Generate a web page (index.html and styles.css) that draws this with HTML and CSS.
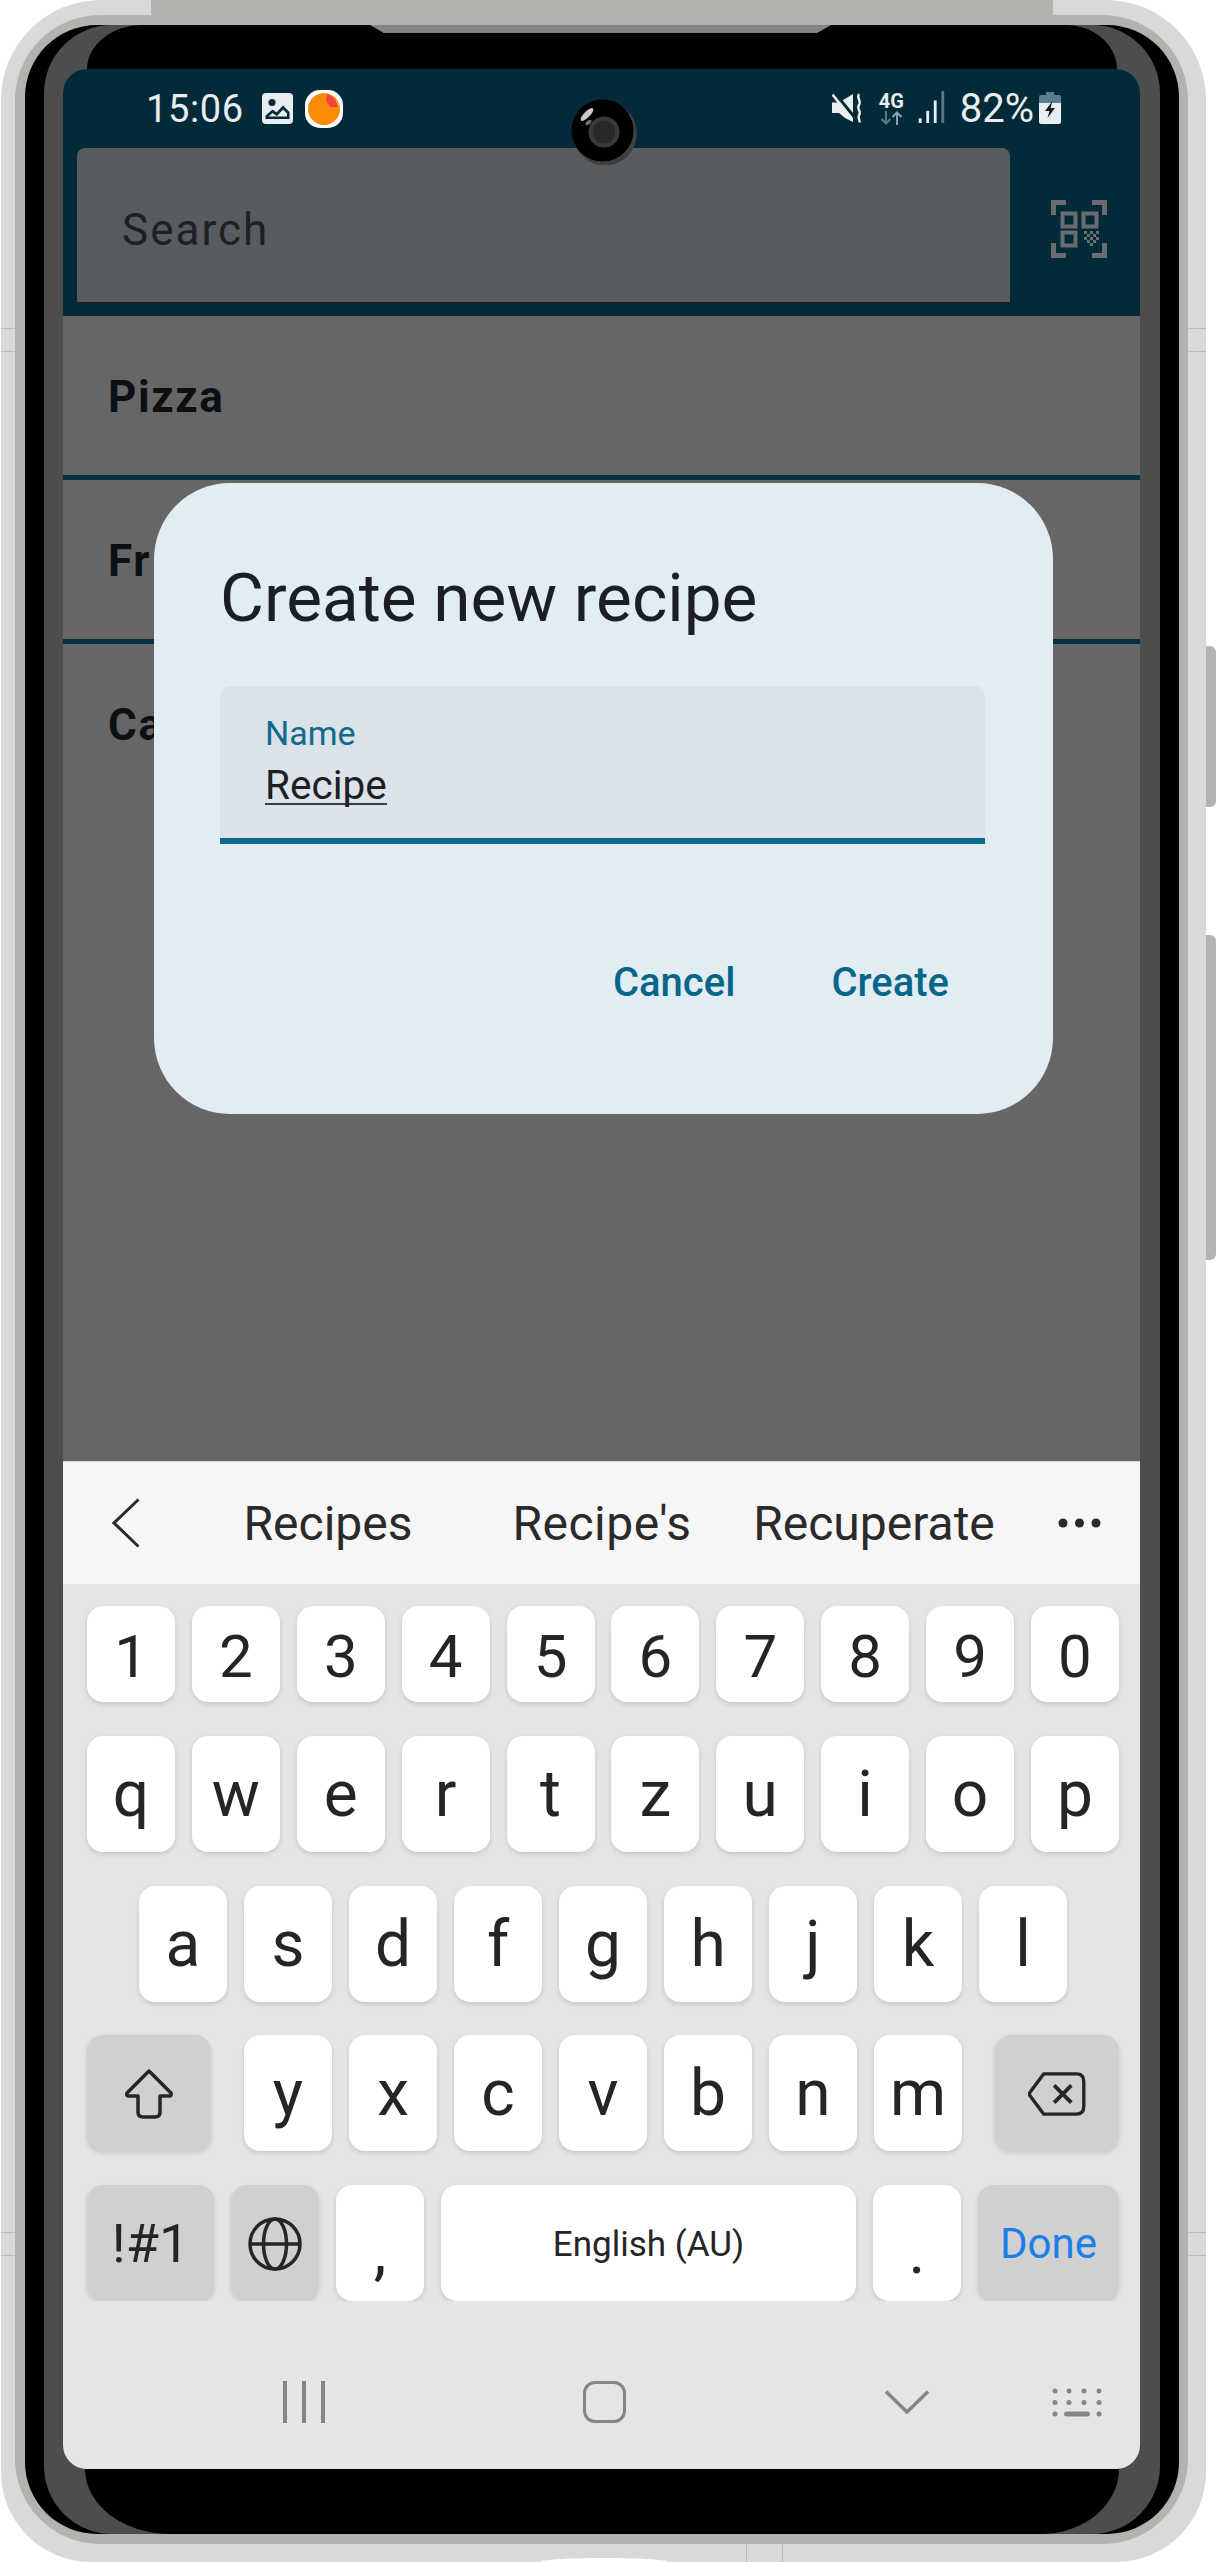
FILE: index.html
```html
<!DOCTYPE html>
<html>
<head>
    <title>Create new recipe</title>
    <link rel="stylesheet" href="styles.css">
</head>
<body>
    <!-- bits of the page behind the phone -->
    <div class="side-button side-button-a"></div>
    <div class="side-button side-button-b"></div>

    <div id="phone">
        <div class="guide guide-left-a"></div>
        <div class="guide guide-left-b"></div>
        <div class="guide guide-left-c"></div>
        <div class="guide guide-left-d"></div>
        <div class="guide guide-right-a"></div>
        <div class="guide guide-right-b"></div>
        <div class="guide guide-right-c"></div>
        <div class="guide guide-right-d"></div>
        <div class="guide guide-bottom-a"></div>
        <div class="guide guide-bottom-b"></div>
        <div class="bottom-bump"></div>
        <div class="top-strip"></div>

        <div id="band">
            <div id="blackEdge">
                <div id="greyEdge">
                    <div class="bezel-top"><div class="notch"></div></div>

                    <div id="screen">
                        <div class="app-header">
                            <div class="status-bar">
                                <div class="status-left">
                                    <span class="status-time">15:06</span>
                                    <svg class="icon-picture" viewBox="0 0 31 31">
                                        <rect width="31" height="31" rx="4" fill="#e8edf0"/>
                                        <circle cx="10" cy="9.500" r="3.600" fill="#022a39"/>
                                        <path d="M3.500 26V22.500L10.500 16.500L14.500 19.500L21 12.500L27.500 19V26Z" fill="#022a39"/>
                                        <path d="M6.500 23.500L10.500 20L15 23L21 16.500L25 20.500V23.500Z" fill="#e8edf0"/>
                                    </svg>
                                    <svg class="icon-app" viewBox="0 0 38 38">
                                        <rect width="38" height="38" rx="15" fill="#fff"/>
                                        <circle cx="19" cy="19" r="16" fill="#fb8a06"/>
                                        <path d="M22 4L31 9L33 17L25 17L21 11Z" fill="#f5423c"/>
                                        <path d="M27 6L34 13L34 18L31 11Z" fill="#fbc02d"/>
                                    </svg>
                                </div>
                                <div class="status-right">
                                    <svg class="icon-mute" viewBox="0 0 30 30">
                                        <path d="M0 9.500H7L21 1V29L13 25L7 20H0Z" fill="#e8edf0"/>
                                        <path d="M3 0L23 25" stroke="#022a39" stroke-width="3"/>
                                        <path d="M0.500 1.500L20 26" stroke="#e8edf0" stroke-width="2.600"/>
                                        <path d="M27 1C24 5 30 8 27 12C24 16 30 18 27 22C25.500 25 28 26 27.500 29.500" fill="none" stroke="#e8edf0" stroke-width="2.400"/>
                                    </svg>
                                    <div class="network">
                                        <span class="network-label">4G</span>
                                        <svg class="icon-arrows" viewBox="0 0 25 14">
                                            <path d="M7 0V12M2.500 8L7 12.500L11.500 8" fill="none" stroke="#5c7682" stroke-width="2"/>
                                            <path d="M18 14V2M13.500 6L18 1.500L22.500 6" fill="none" stroke="#8ca1ab" stroke-width="2"/>
                                        </svg>
                                    </div>
                                    <svg class="icon-signal" viewBox="0 0 28 34">
                                        <rect x="1" y="29" width="3" height="5" fill="#e8edf0"/>
                                        <rect x="9" y="21" width="3" height="13" fill="#e8edf0"/>
                                        <rect x="17" y="10" width="3" height="24" fill="#e8edf0"/>
                                        <rect x="25" y="0" width="3" height="34" fill="#5c7682"/>
                                    </svg>
                                    <span class="status-battery-text">82%</span>
                                    <svg class="icon-battery" viewBox="0 0 22 32">
                                        <path d="M7 0H15V3H20.500Q22 3 22 5V11H0V5Q0 3 1.500 3H7Z" fill="#5c7d8d"/>
                                        <path d="M0 11H22V30Q22 32 20 32H2Q0 32 0 30Z" fill="#e8edf0"/>
                                        <path d="M13.500 9L6 19H10.500L8.500 26L16 16H11.500Z" fill="#16191c"/>
                                    </svg>
                                </div>
                            </div>
                            <div class="search-row">
                                <div class="search-box">Search</div>
                                <svg class="icon-qr" viewBox="0 0 56 58" fill="none" stroke="#6a6d70" stroke-width="5">
                                    <path d="M2.500 15V2.500H15M41 2.500H53.500V15M2.500 43V55.500H15M41 55.500H53.500V43"/>
                                    <rect x="11.500" y="13.500" width="13" height="13" stroke-width="4"/>
                                    <rect x="32.500" y="13.500" width="13" height="13" stroke-width="4"/>
                                    <rect x="11.500" y="32.500" width="13" height="13" stroke-width="4"/>
                                    <path d="M33 31h3v3h-3zM39 31h3v3h-3zM45 31h3v3h-3zM36 34h3v3h-3zM42 34h3v3h-3zM33 37h3v3h-3zM39 37h3v3h-3zM45 37h3v3h-3zM36 40h3v3h-3zM42 40h3v3h-3zM39 43h3v3h-3z" fill="#6a6d70" stroke="none"/>
                                </svg>
                            </div>
                        </div>

                        <div class="recipe-list">
                            <div class="recipe-row">Pizza</div>
                            <div class="recipe-row">Fr</div>
                            <div class="recipe-row no-line">Ca</div>
                        </div>

                        <div class="suggestions">
                            <svg class="icon-back" viewBox="0 0 28 50"><path d="M26.500 1.500L2 25L26.500 48.500" fill="none" stroke="#2a2a2a" stroke-width="3"/></svg>
                            <span class="word word-a">Recipes</span>
                            <span class="word word-b">Recipe's</span>
                            <span class="word word-c">Recuperate</span>
                            <svg class="icon-dots" viewBox="0 0 43 10">
                                <circle cx="5" cy="5" r="4.500" fill="#2a2a2a"/>
                                <circle cx="21.500" cy="5" r="4.500" fill="#2a2a2a"/>
                                <circle cx="38" cy="5" r="4.500" fill="#2a2a2a"/>
                            </svg>
                        </div>

                        <div class="keyboard">
                            <div class="key-row row-digits">
                                <div class="key">1</div><div class="key">2</div><div class="key">3</div><div class="key">4</div><div class="key">5</div>
                                <div class="key">6</div><div class="key">7</div><div class="key">8</div><div class="key">9</div><div class="key">0</div>
                            </div>
                            <div class="key-row">
                                <div class="key">q</div><div class="key">w</div><div class="key">e</div><div class="key">r</div><div class="key">t</div>
                                <div class="key">z</div><div class="key">u</div><div class="key">i</div><div class="key">o</div><div class="key">p</div>
                            </div>
                            <div class="key-row row-center">
                                <div class="key">a</div><div class="key">s</div><div class="key">d</div><div class="key">f</div><div class="key">g</div>
                                <div class="key">h</div><div class="key">j</div><div class="key">k</div><div class="key">l</div>
                            </div>
                            <div class="key-row row-shift">
                                <div class="key key-fn key-shift">
                                    <svg class="icon-shift" viewBox="0 0 50 50"><path d="M25 2L47 24Q48 27 45 27H36V43Q36 48 31 48H19Q14 48 14 43V27H5Q2 27 3 24Z" fill="none" stroke="#252525" stroke-width="3.500" stroke-linejoin="round"/></svg>
                                </div>
                                <div class="letters">
                                    <div class="key">y</div><div class="key">x</div><div class="key">c</div><div class="key">v</div>
                                    <div class="key">b</div><div class="key">n</div><div class="key">m</div>
                                </div>
                                <div class="key key-fn key-shift">
                                    <svg class="icon-backspace" viewBox="0 0 60 46"><path d="M16 2H50Q58 2 58 10V36Q58 44 50 44H16L2 25Q0 23 2 21Z" fill="none" stroke="#252525" stroke-width="3.500" stroke-linejoin="round"/><path d="M27 14L45 32M45 14L27 32" stroke="#252525" stroke-width="4"/></svg>
                                </div>
                            </div>
                            <div class="key-row">
                                <div class="key key-fn key-symbols">!#1</div>
                                <div class="key key-fn">
                                    <svg class="icon-globe" viewBox="0 0 54 54" fill="none" stroke="#252525" stroke-width="3.500">
                                        <circle cx="27" cy="27" r="25"/>
                                        <ellipse cx="27" cy="27" rx="11.500" ry="25"/>
                                        <path d="M2 27H52"/>
                                    </svg>
                                </div>
                                <div class="key key-punct">,</div>
                                <div class="key key-space">English (AU)</div>
                                <div class="key key-punct">.</div>
                                <div class="key key-fn key-done">Done</div>
                            </div>
                        </div>

                        <div class="nav-bar">
                            <svg class="icon-recents" viewBox="0 0 42 42"><path d="M2 0V42M21 0V42M40 0V42" stroke="#858585" stroke-width="4"/></svg>
                            <div class="icon-home"></div>
                            <svg class="icon-chevron" viewBox="0 0 44 24"><path d="M1 1.500L22 22L43 1.500" fill="none" stroke="#858585" stroke-width="3.500"/></svg>
                            <svg class="icon-kbd" viewBox="0 0 50 29" fill="#858585">
                                <circle cx="3" cy="3" r="2.500"/><circle cx="17" cy="3" r="2.500"/><circle cx="32" cy="3" r="2.500"/><circle cx="47" cy="3" r="2.500"/>
                                <circle cx="3" cy="14.500" r="2.500"/><circle cx="17" cy="14.500" r="2.500"/><circle cx="32" cy="14.500" r="2.500"/><circle cx="47" cy="14.500" r="2.500"/>
                                <circle cx="3" cy="26" r="2.500"/><rect x="12" y="23.500" width="26" height="5" rx="2.500"/><circle cx="47" cy="26" r="2.500"/>
                            </svg>
                        </div>

                        <!-- dialog on top of the dimmed list -->
                        <div class="dialog">
                            <h2 class="dialog-title">Create new recipe</h2>
                            <div class="name-field">
                                <div class="name-label">Name</div>
                                <div class="name-value">Recipe</div>
                            </div>
                            <div class="dialog-actions">
                                <span class="dialog-button">Cancel</span>
                                <span class="dialog-button">Create</span>
                            </div>
                        </div>
                    </div>

                    <div class="bezel-bottom"></div>
                </div>
            </div>
        </div>

        <svg class="camera" viewBox="0 0 66 66">
            <circle cx="34" cy="34.500" r="32" fill="#3f3f3f"/>
            <circle cx="31.500" cy="31.500" r="31" fill="#000"/>
            <circle cx="33" cy="33" r="15.500" fill="#3a3a3a"/>
            <circle cx="33" cy="33" r="11.500" fill="#282828"/>
            <ellipse cx="16" cy="15.500" rx="3" ry="8.500" transform="rotate(45 16 15.500)" fill="#c9c9c9"/>
            <ellipse cx="17.500" cy="23.500" rx="2" ry="3.500" transform="rotate(50 17.500 23.500)" fill="#6d6d6d"/>
        </svg>
    </div>
</body>
</html>
```
FILE: styles.css
```css
body {
    font-family: Roboto, "Liberation Sans", sans-serif;
    background-color: #fff;
    margin: 0;
    width: 1216px;
    height: 2562px;
    position: relative;
    overflow: hidden;
}

/* Phone frame, one nested layer per coloured edge */
#phone {
    position: relative;
    box-sizing: border-box;
    width: 1205px;
    height: 2562px;
    margin-left: 1px;
    padding: 15px 18px 18px 14px;
    background-color: #d9d9d9;
    border-radius: 100px 100px 90px 90px;
}

#band {
    box-sizing: border-box;
    height: 100%;
    padding: 10px 9px 10px 10px;
    background-color: #b3b2ae;
    border-radius: 85px;
}

#blackEdge {
    box-sizing: border-box;
    height: 100%;
    padding: 0 19px;
    background-color: #000;
    border-radius: 72px;
}

#greyEdge {
    height: 100%;
    display: flex;
    flex-direction: column;
    background-color: #4d4d4d;
    border-radius: 68px;
}

.bezel-top {
    position: relative;
    height: 44px;
    margin: 0 43px;
    background-color: #000;
    border-radius: 56px 52px 0 0 / 44px 44px 0 0;
}

.notch {
    position: absolute;
    top: 0;
    left: 283px;
    width: 461px;
    height: 8px;
    background-color: #858585;
    clip-path: polygon(0 0, 100% 0, 97% 100%, 3% 100%);
}

.bezel-bottom {
    height: 65px;
    margin: 0 41px;
    background-color: #000;
    border-radius: 0 0 78px 85px / 0 0 65px 65px;
}

.top-strip {
    position: absolute;
    top: 0;
    left: 150px;
    width: 902px;
    height: 25px;
    background-color: #b3b2ae;
}

.side-button {
    position: absolute;
    left: 1200px;
    width: 16px;
    background-color: #b3b3b3;
    border-radius: 0 6px 6px 0;
}

.side-button-a {
    top: 646px;
    height: 161px;
}

.side-button-b {
    top: 935px;
    height: 325px;
}

.guide {
    position: absolute;
    background-color: #bcbcbc;
}

.guide-left-a, .guide-left-b, .guide-left-c, .guide-left-d {
    left: 0;
    width: 14px;
    height: 1px;
}

.guide-right-a, .guide-right-b, .guide-right-c, .guide-right-d {
    left: 1187px;
    width: 18px;
    height: 1px;
}

.guide-left-a, .guide-right-a { top: 328px; }
.guide-left-b, .guide-right-b { top: 351px; }
.guide-left-c, .guide-right-c { top: 2232px; }
.guide-left-d, .guide-right-d { top: 2255px; }

.guide-bottom-a, .guide-bottom-b {
    top: 2544px;
    width: 1px;
    height: 18px;
}

.guide-bottom-a { left: 745px; }
.guide-bottom-b { left: 781px; }

.bottom-bump {
    position: absolute;
    left: 539px;
    top: 2558px;
    width: 128px;
    height: 4px;
    background-color: #fff;
    border-radius: 50% 50% 0 0 / 100% 100% 0 0;
}

.camera {
    position: absolute;
    left: 570px;
    top: 99px;
    width: 66px;
    height: 66px;
}

/* Screen */
#screen {
    position: relative;
    height: 2400px;
    margin: 0 20px 0 19px;
    display: flex;
    flex-direction: column;
    background-color: #666;
    border-radius: 24px;
    overflow: hidden;
}

.app-header {
    height: 247px;
    flex-shrink: 0;
    background-color: #022a39;
}

.status-bar {
    height: 79px;
    display: flex;
    justify-content: space-between;
    padding: 0 79px 0 83px;
    box-sizing: border-box;
    color: #e8edf0;
}

.status-left, .status-right {
    display: flex;
    align-items: flex-start;
    padding-top: 21px;
}

.status-time {
    font-size: 38px;
    line-height: 38px;
    letter-spacing: 0.6px;
}

.icon-picture {
    width: 31px;
    height: 31px;
    margin: 3px 0 0 18px;
}

.icon-app {
    width: 38px;
    height: 38px;
    margin: 0 0 0 12px;
}

.icon-mute {
    width: 30px;
    height: 30px;
    margin-top: 3px;
}

.network {
    width: 25px;
    margin: 2px 0 0 17px;
}

.network-label {
    display: block;
    font-size: 20px;
    line-height: 18px;
    font-weight: 700;
}

.icon-arrows {
    display: block;
    width: 25px;
    height: 14px;
    margin-top: 1px;
}

.icon-signal {
    width: 28px;
    height: 32px;
    margin: 1px 0 0 13px;
}

.status-battery-text {
    font-size: 40px;
    line-height: 38px;
    margin-left: 15px;
}

.icon-battery {
    width: 22px;
    height: 32px;
    margin: 2px 0 0 5px;
}

.search-row {
    display: flex;
    align-items: flex-start;
    padding-left: 14px;
}

.search-box {
    box-sizing: border-box;
    width: 933px;
    height: 156px;
    padding: 57px 0 0 45px;
    font-size: 44px;
    line-height: 50px;
    letter-spacing: 2px;
    color: #1d2125;
    background-color: #585c5f;
    border-bottom: 2px solid #1c1f21;
    border-radius: 8px 8px 0 0;
}

.icon-qr {
    width: 56px;
    height: 58px;
    margin: 52px 0 0 41px;
}

.recipe-list {
    flex: 1;
}

.recipe-row {
    height: 156px;
    padding: 3px 0 0 45px;
    font-size: 44px;
    font-weight: 700;
    letter-spacing: 1.6px;
    line-height: 156px;
    color: #0d1013;
    border-bottom: 5px solid #04303f;
}

.no-line {
    border-bottom: none;
}

/* Dialog */
.dialog {
    position: absolute;
    left: 91px;
    top: 414px;
    box-sizing: border-box;
    width: 899px;
    height: 631px;
    padding: 0 68px 0 66px;
    background-color: #e1ecf3;
    border-radius: 76px;
}

.dialog-title {
    margin: 0;
    padding: 77px 0 0;
    font-size: 67.500px;
    line-height: 76px;
    font-weight: 400;
    color: #1b1f23;
}

.name-field {
    box-sizing: border-box;
    height: 158px;
    margin-top: 50px;
    padding: 25px 0 0 45px;
    background-color: #dbe2e9;
    border-bottom: 6px solid #0b6a8b;
    border-radius: 10px 10px 0 0;
}

.name-label {
    font-size: 34px;
    line-height: 44px;
    color: #106a8c;
}

.name-value {
    display: inline-block;
    font-size: 40.500px;
    line-height: 36px;
    margin-top: 12px;
    color: #1c2024;
    border-bottom: 2px solid #3a3e42;
}

.dialog-actions {
    display: flex;
    justify-content: flex-end;
    gap: 96px;
    margin-top: 115px;
    padding-right: 36px;
}

.dialog-button {
    font-size: 40px;
    line-height: 48px;
    font-weight: 500;
    color: #05668a;
}

/* Keyboard */
.suggestions {
    height: 123px;
    flex-shrink: 0;
    display: flex;
    align-items: center;
    background-color: #f6f6f6;
    border-top: 1px solid #d4d4d4;
    box-sizing: border-box;
}

.icon-back {
    width: 28px;
    height: 50px;
    margin-left: 49px;
}

.word {
    font-size: 48px;
    color: #2a2a2a;
    text-align: center;
    flex-shrink: 0;
}

.word-a {
    width: 280px;
    margin-left: 48px;
}

.word-b {
    width: 268px;
    letter-spacing: 0.5px;
}

.word-c {
    width: 276px;
}

.icon-dots {
    width: 43px;
    height: 10px;
    margin-left: 46px;
}

.keyboard {
    flex-shrink: 0;
    display: flex;
    flex-direction: column;
    gap: 33.750px;
    padding: 22px 21px 0 24px;
    background-color: #e5e5e5;
}

.key-row {
    display: flex;
    justify-content: space-between;
    height: 116px;
}

.row-digits {
    height: 96px;
}

.row-center {
    justify-content: center;
    gap: 17px;
}

.row-shift .letters {
    display: flex;
    gap: 17px;
}

.key {
    box-sizing: border-box;
    width: 88px;
    height: 100%;
    padding-top: 2px;
    display: flex;
    align-items: center;
    justify-content: center;
    flex-shrink: 0;
    background-color: #fff;
    border-radius: 16px;
    box-shadow: 0 2px 5px rgba(0, 0, 0, 0.14);
    font-size: 64px;
    line-height: 1;
    color: #252525;
}

.row-digits .key {
    font-size: 60px;
    padding-top: 6px;
}

.key-fn {
    background-color: #d0d0d0;
}

.key-shift {
    width: 124px;
}

.key-symbols {
    width: 127px;
    font-size: 54px;
}

.key-punct {
    padding-top: 18px;
}

.key-space {
    width: 415px;
    font-size: 35px;
}

.key-done {
    width: 141px;
    font-size: 42px;
    color: #1a7fe8;
}

.icon-shift {
    width: 50px;
    height: 50px;
}

.icon-backspace {
    width: 58px;
    height: 44px;
}

.icon-globe {
    width: 54px;
    height: 54px;
}

/* Navigation bar */
.nav-bar {
    height: 168px;
    flex-shrink: 0;
    display: flex;
    align-items: flex-start;
    background-color: #e5e5e5;
}

.icon-recents {
    width: 42px;
    height: 42px;
    margin: 80px 0 0 220px;
}

.icon-home {
    box-sizing: border-box;
    width: 43px;
    height: 42px;
    margin: 80px 0 0 258px;
    border: 3px solid #858585;
    border-radius: 12px;
}

.icon-chevron {
    width: 44px;
    height: 24px;
    margin: 89px 0 0 259px;
}

.icon-kbd {
    width: 50px;
    height: 29px;
    margin: 87px 0 0 123px;
}
```
